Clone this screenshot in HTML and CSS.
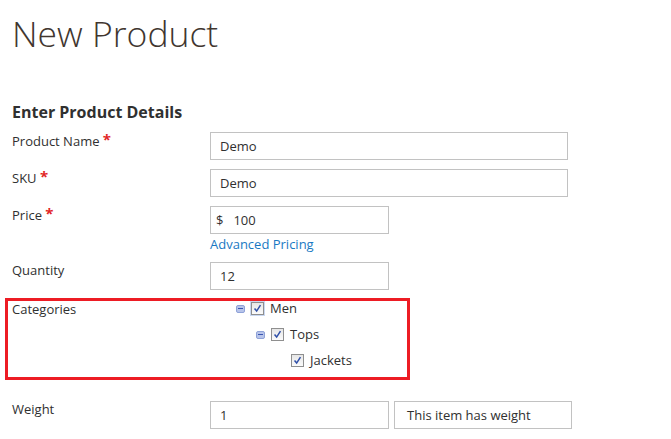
FILE: index.html
```html
<!DOCTYPE html>
<html>
<head>
<meta charset="utf-8">
<link rel="stylesheet" href="styles.css">
</head>
<body>
<div class="page">
  <h1 class="title">New Product</h1>
  <h2 class="section">Enter Product Details</h2>

  <div class="row">
    <div class="label">Product Name <span class="req">*</span></div>
    <div class="control"><div class="input wide">Demo</div></div>
  </div>

  <div class="row">
    <div class="label">SKU <span class="req">*</span></div>
    <div class="control"><div class="input wide">Demo</div></div>
  </div>

  <div class="row row-price">
    <div class="label">Price <span class="req">*</span></div>
    <div class="control">
      <div class="input narrow price"><span class="cur">$</span>100</div>
      <a class="link" href="#">Advanced Pricing</a>
    </div>
  </div>

  <div class="row row-qty">
    <div class="label">Quantity</div>
    <div class="control"><div class="input narrow">12</div></div>
  </div>

  <div class="row highlight">
    <div class="label">Categories</div>
    <div class="control tree">
      <div class="node lvl1">
        <span class="toggle"></span>
        <span class="cb focus"><svg viewBox="0 0 13 13" width="13" height="13"><path d="M3 6.5 L5.5 9.5 L10 2.5" fill="none" stroke="#2f4fa8" stroke-width="1.8"/></svg></span>
        <span class="txt">Men</span>
      </div>
      <div class="node lvl2">
        <span class="toggle"></span>
        <span class="cb"><svg viewBox="0 0 13 13" width="13" height="13"><path d="M3 6.5 L5.5 9.5 L10 2.5" fill="none" stroke="#2f4fa8" stroke-width="1.8"/></svg></span>
        <span class="txt">Tops</span>
      </div>
      <div class="node lvl3">
        <span class="cb"><svg viewBox="0 0 13 13" width="13" height="13"><path d="M3 6.5 L5.5 9.5 L10 2.5" fill="none" stroke="#2f4fa8" stroke-width="1.8"/></svg></span>
        <span class="txt">Jackets</span>
      </div>
    </div>
  </div>

  <div class="row row-weight">
    <div class="label">Weight</div>
    <div class="control inline">
      <div class="input narrow">1</div>
      <div class="input narrow select">This item has weight</div>
    </div>
  </div>
</div>
</body>
</html>
```

FILE: styles.css
```css
html, body {
  margin: 0;
  padding: 0;
  background: #fff;
}
body {
  font-family: "Open Sans", "Noto Sans", sans-serif;
  font-size: 13px;
  color: #303030;
}
.page {
  padding: 0 0 0 12px;
}
.title {
  margin: 0;
  padding-top: 9px;
  font-size: 35.5px;
  font-weight: 300;
  line-height: 48px;
  color: #41362f;
}
.section {
  margin: 44px 0 0 0;
  font-size: 16px;
  font-weight: 700;
  line-height: 22px;
  color: #303030;
}
.row {
  display: flex;
  margin-top: 9px;
}
.label {
  width: 198px;
  flex: none;
  line-height: 17px;
}
.req {
  color: #e22626;
  font-weight: 700;
  font-size: 15px;
  position: relative;
  top: -1px;
}
.control {
  display: flex;
  flex-direction: column;
}
.input {
  box-sizing: border-box;
  height: 28px;
  border: 1px solid #c2c2c2;
  padding: 0 9px;
  line-height: 26px;
  color: #303030;
}
.wide { width: 358px; }
.narrow { width: 179px; }
.price { padding-left: 5px; }
.cur { margin-right: 10px; color: #303030; }
.link {
  color: #1979c3;
  text-decoration: none;
  line-height: 18px;
  margin-top: 1px;
}
.section + .row { margin-top: 9px; }
.row-qty { margin-top: 9px; }
.highlight {
  margin-left: -7px;
  margin-top: 8px;
  width: 395px;
  height: 76px;
  border: 3px solid #ed1c24;
  padding: 0 0 0 4px;
}
.highlight .label {
  width: 198px;
  padding-top: 0;
}
.tree {
  margin-top: -6px;
}
.node {
  display: flex;
  align-items: center;
  height: 26px;
}
.lvl1 { padding-left: 26px; }
.lvl2 { padding-left: 46px; }
.lvl3 { padding-left: 81px; }
.toggle {
  box-sizing: border-box;
  width: 9px;
  height: 8px;
  border-radius: 2px;
  background: #b7c4ea;
  border: 1px solid #8fa2d8;
  position: relative;
  margin-right: 6px;
  margin-top: 2px;
}
.toggle::after {
  content: "";
  position: absolute;
  left: 1px;
  right: 1px;
  top: 2px;
  height: 1px;
  background: #3a55b0;
}
.cb {
  box-sizing: border-box;
  width: 13px;
  height: 13px;
  border: 1px solid #8f8f8f;
  background: linear-gradient(#e6e6e6, #fbfbfb);
  display: flex;
  align-items: center;
  justify-content: center;
  margin-right: 6px;
}
.cb svg { display: block; width: 11px; height: 11px; }
.cb.focus { box-shadow: 0 0 0 1px #c9d8f2; }
.txt {
  font-size: 13px;
  color: #303030;
}
.row-weight { margin-top: 21px; }
.inline {
  flex-direction: row;
  gap: 5px;
}
.select { padding-left: 12px; width: 178px; }
```
